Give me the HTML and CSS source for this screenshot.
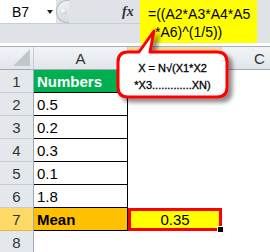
FILE: index.html
```html
<!DOCTYPE html>
<html lang="en">
<head>
  <meta charset="UTF-8">
  <title>Geometric mean</title>
  <link rel="stylesheet" href="styles.css">
</head>
<body>
  <div class="formula-bar">
    <div class="name-col">
      <div class="name-row">
        <div class="name-box">B7<span class="drop"></span></div>
        <div class="knob"><span class="dot"></span></div>
        <div class="fx">fx</div>
      </div>
    </div>
    <div class="formula">=((A2*A3*A4*A5<br><span class="indent">*A6)^(1/5))</span></div>
  </div>
  <div class="bar-line"></div>

  <div class="sheet">
    <div class="corner"><span class="tri"></span></div>
    <div class="col-head">A</div>
    <div class="col-head sel">B</div>
    <div class="col-head last">C</div>

    <div class="row-head">1</div>
    <div class="cell head-cell">Numbers</div>
    <div class="cell empty"></div>
    <div class="cell empty"></div>

    <div class="row-head">2</div>
    <div class="cell num">0.5</div>
    <div class="cell empty"></div>
    <div class="cell empty"></div>

    <div class="row-head">3</div>
    <div class="cell num">0.2</div>
    <div class="cell empty"></div>
    <div class="cell empty"></div>

    <div class="row-head">4</div>
    <div class="cell num">0.3</div>
    <div class="cell empty"></div>
    <div class="cell empty"></div>

    <div class="row-head">5</div>
    <div class="cell num">0.1</div>
    <div class="cell empty"></div>
    <div class="cell empty"></div>

    <div class="row-head">6</div>
    <div class="cell num">1.8</div>
    <div class="cell empty"></div>
    <div class="cell empty"></div>

    <div class="row-head sel">7</div>
    <div class="cell mean">Mean</div>
    <div class="cell result">0.35<span class="handle"></span></div>
    <div class="cell empty"></div>

    <div class="row-head">8</div>
    <div class="cell empty"></div>
    <div class="cell empty"></div>
    <div class="cell empty"></div>
  </div>

  <div class="callout">
    <svg width="130" height="84" viewBox="0 0 130 84">
      <defs>
        <filter id="shade" x="-10%" y="-10%" width="130%" height="140%">
          <feDropShadow dx="4" dy="4" stdDeviation="2" flood-color="#000" flood-opacity="0.45"/>
        </filter>
      </defs>
      <path d="M16 26 L27 26 L42 5 L38 26 L105 26 Q115 26 115 36 L115 61 Q115 71 105 71 L16 71 Q6 71 6 61 L6 36 Q6 26 16 26 Z"
            fill="#fff" stroke="#ff0000" stroke-width="3" stroke-linejoin="round" filter="url(#shade)"/>
    </svg>
    <div class="callout-text">X = N√(X1*X2<br>*X3.............XN)</div>
  </div>
</body>
</html>
```

FILE: styles.css
```css
body {
  margin: 0;
  width: 270px;
  height: 252px;
  overflow: hidden;
  position: relative;
  background: #fff;
  font-family: "Liberation Sans", Arial, sans-serif;
  font-size: 14px;
  color: #000;
}

/* formula bar */
.formula-bar {
  display: flex;
  height: 43px;
  background: #dfe3e8;
}

.name-col {
  width: 140px;
}

.name-row {
  display: flex;
  align-items: center;
  height: 23px;
  border-bottom: 1px solid #c9ced6;
}

.name-box {
  display: flex;
  align-items: center;
  width: 56px;
  height: 23px;
  padding-left: 12px;
  box-sizing: border-box;
  background: #fff;
  font-size: 14px;
}

.drop {
  margin-left: 18px;
  border-left: 3px solid transparent;
  border-right: 3px solid transparent;
  border-top: 4px solid #222;
}

.knob {
  width: 12px;
  height: 21px;
  border: 1px solid #b8bec7;
  border-right: none;
  border-radius: 11px 0 0 11px;
  background: linear-gradient(#eef0f3, #d8dce2);
  display: flex;
  align-items: center;
  justify-content: center;
}

.dot {
  width: 7px;
  height: 7px;
  border-radius: 50%;
  background: radial-gradient(circle at 40% 35%, #fff, #b9bec6);
}

.fx {
  margin-left: 53px;
  font-family: "Liberation Serif", serif;
  font-style: italic;
  font-weight: bold;
  font-size: 14px;
  color: #333;
}

.formula {
  width: 117px;
  height: 43px;
  box-sizing: border-box;
  padding: 5px 0 0 8px;
  background: #ffff00;
  font-size: 14px;
  line-height: 18px;
  white-space: nowrap;
}

.indent {
  padding-left: 7px;
}

.bar-line {
  height: 3px;
  background: #fff;
  border-bottom: 1px solid #a7b0bc;
}

/* sheet grid */
.sheet {
  display: grid;
  grid-template-columns: 34px 94px 94px 1fr;
  grid-template-rows: repeat(9, 23px);
}

.corner,
.col-head,
.row-head {
  box-sizing: border-box;
  background: linear-gradient(#f2f4f7, #e1e5ea);
  color: #333;
  border-right: 1px solid #c5cbd4;
  border-bottom: 1px solid #9eaab8;
  display: flex;
  align-items: center;
  justify-content: center;
  font-size: 15px;
}

.col-head.last {
  justify-content: flex-start;
  padding-left: 32px;
  border-right: none;
}

.corner {
  position: relative;
}

.tri {
  position: absolute;
  right: 3px;
  bottom: 3px;
  border-left: 17px solid transparent;
  border-bottom: 17px solid #c2c7ce;
}

.row-head {
  background: #e4e8ed;
  border-bottom: 1px solid #c5cbd4;
  border-right: 1px solid #9eaab8;
}

.col-head.sel {
  background: linear-gradient(#f9d99b, #f1c15f);
  border-bottom-color: #c28a30;
}

.row-head.sel {
  background: #ffd966;
  border-bottom-color: #e2b64e;
}

.cell {
  box-sizing: border-box;
  display: flex;
  align-items: center;
  padding-left: 3px;
  font-size: 15px;
}

.head-cell,
.num,
.mean {
  border-right: 1px solid #000;
  border-bottom: 1px solid #000;
}

.head-cell {
  background: #00b050;
  color: #fff;
  font-weight: bold;
}

.mean {
  background: #ffc000;
  font-weight: bold;
}

.result {
  position: relative;
  justify-content: center;
  padding-left: 0;
  background: #ffff00;
  border: 3px solid #ff0000;
}

.handle {
  position: absolute;
  right: -5px;
  bottom: -5px;
  width: 5px;
  height: 5px;
  background: #000;
  border: 1px solid #fff;
}

/* callout over the grid */
.callout {
  position: absolute;
  left: 112px;
  top: 26px;
  width: 130px;
  height: 84px;
}

.callout svg {
  display: block;
}

.callout-text {
  position: absolute;
  left: 6px;
  top: 34px;
  width: 109px;
  text-align: center;
  font-size: 11px;
  line-height: 17px;
  color: #000;
  -webkit-text-stroke: 0.3px #000;
}
```
